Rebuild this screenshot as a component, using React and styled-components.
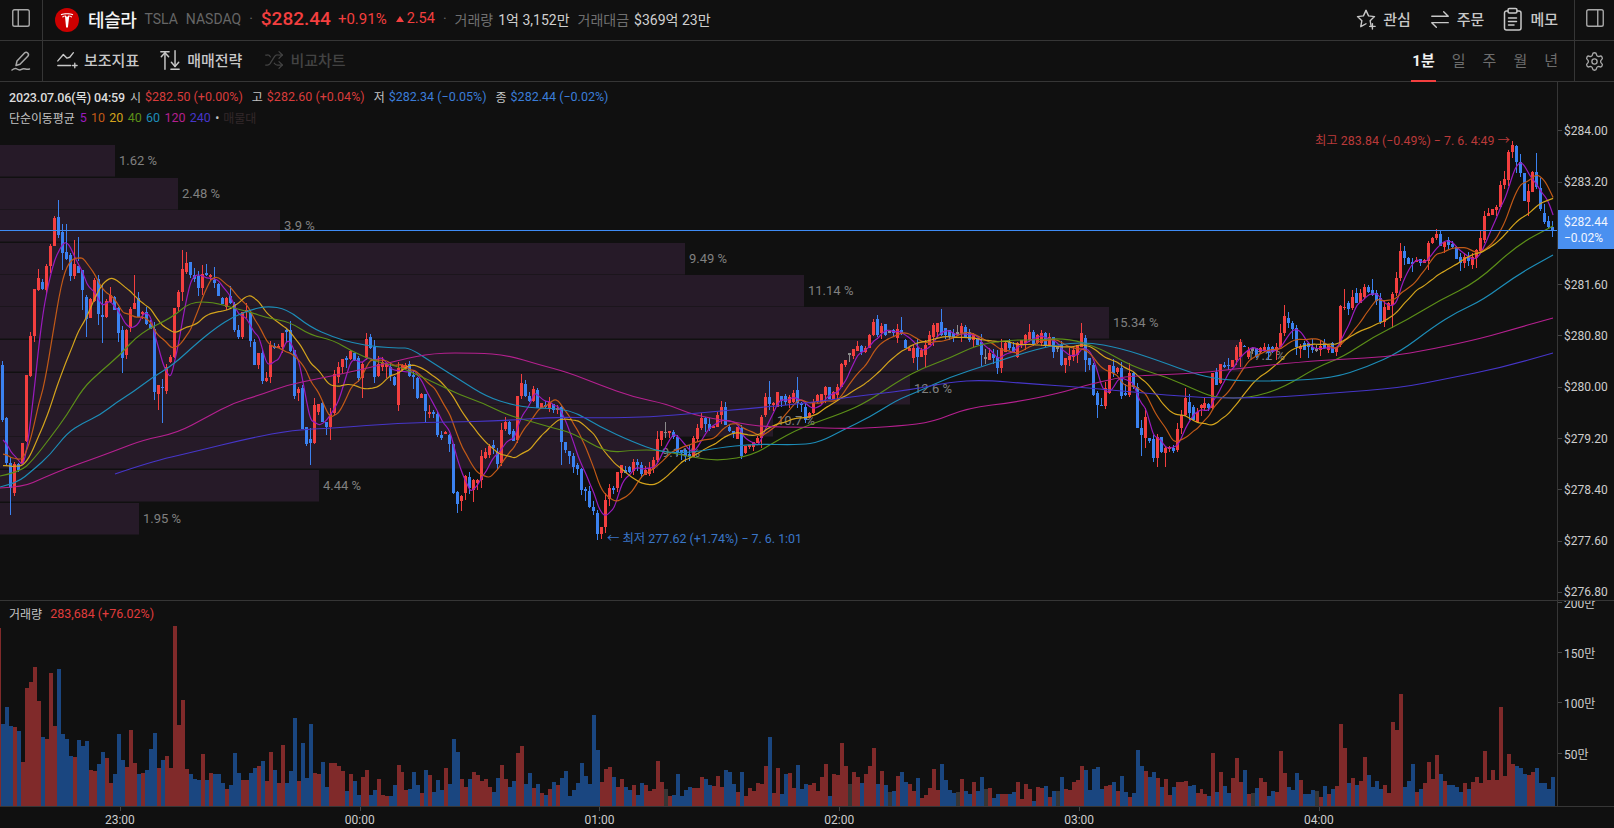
import React from 'react';
import styled, { createGlobalStyle } from 'styled-components';
import { PanelLeft, PanelRight, Shuffle, Settings } from 'lucide-react';

const RED = '#f33f3f';
const BLUE = '#3b82f0';
const LINE = '#363636';
const FONT = 'Roboto, "Noto Sans CJK KR", sans-serif';

const Global = createGlobalStyle`
  html, body { margin: 0; padding: 0; background: #101010; overflow: hidden; }
  * { box-sizing: border-box; }
`;

const VOL = `r178 b82 b99 b80 r79 b75 r44 r118 r124 r139 r105 b69 r67 r133 r80 b137 b72 b67 b50 r49 b66 b60 b65 r36 r35 b42 b54 r48 r23 b32 b72 b46 r39 r76 r43 b32 r33 b36 b57 b73 r38 b46 r50 r38 r180 r81 r106 r37 b32 b27 b26 r52 b26 r33 b32 b32 b23 r17 b21 b53 b33 r26 r26 b33 b38 r40 b45 r25 r54 b36 r23 r61 b23 b35 b88 r25 b63 b28 b82 r33 r32 b44 b19 r43 r43 r40 r35 b15 r32 b25 b11 r29 r36 b11 b16 r27 r11 r10 b10 b21 r41 r34 r16 b17 b34 b21 r13 b36 r31 b14 b26 b16 r38 b22 b67 b54 r27 r19 b27 r34 r31 r25 r27 r19 b14 b28 r41 r27 b19 b25 r53 r60 b22 b33 r18
b22 r13 b11 r17 b24 r21 b28 b35 b10 b16 b23 b43 b30 b22 b91 b56 r24 r37 r39 b29 r19 r27 b19 b16 r21 b11 b23 r21 r15 r17 r45 r24 g17 r10 b11 b32 b10 b16 b19 r18 r18 r29 b27 b21 r20 r30 r19 b36 b34 b22 r14 b34 r10 r18 r15 r23 r22 r40 b69 r13 r38 b12 b32 r33 r18 b41 b17 b22 r21 r23 r15 r29 r42 b10 r32 r31 r63 r40 g22 r34 r29 b23 r32 r40 r58 b22 r35 b21 g14 b15 r30 b34 b24 r22 r15 b28 r8 r11 r18 r37 r16 b42 b26 b16 b13 g14 r27 b15 b12 r24 b15 b29 g17 r18 b8 b12 r12 r12 b12 b14 r24 r7 r22 r17 b5 r19 r18 b20 r9 b15 g15 b29 r17 r16 r24 r26 r40 b36 b16 b37 b39 b17 r20 r21 b24 r15
b30 b14 r9 b13 b56 b40 r35 b29 b34 r28 b19 r27 r11 b19 r24 r24 r25 b20 b21 r13 r17 r12 b10 r53 b14 r34 b20 b13 r28 r48 r24 b36 r12 g13 b18 r28 r24 b10 b15 r14 r55 r33 b19 b16 b33 r26 b12 b12 b16 g15 r9 b20 r12 b17 r20 r82 r58 b23 r28 b21 r25 r49 b31 b19 b25 b17 r21 r13 r84 r76 r112 b19 b25 b42 r14 b17 r23 r44 r27 r51 b32 r25 b21 b21 b19 b14 r23 b17 r24 r29 r23 r55 r26 r36 r26 r99 r30 r52 r42 b40 b38 b32 r31 r34 b38 b23 b23 b17 b29`
  .split(/\s+/).map((s) => ({ c: s[0], h: Number(s.slice(1)) }));

const BODIES = `365,420 418,463 463,488 464,493 464,470 443,463 375,441 336,376 289,336 278,290
282,289 266,290 246,266 218,246 217,235 232,253 252,259 255,276 264,276 266,273
270,290 297,319 299,318 280,301 279,314 315,317 301,317 295,302 297,310 308,333
330,358 330,355 309,328 303,309 298,317 312,314 312,324 324,329 329,392 385,394
387,388 367,391 357,362 308,357 292,307 269,292 263,272 262,275 275,279 276,288
274,288 273,275 275,277 280,283 284,296 298,304 298,307 296,303 304,330 330,337
312,337 310,312 312,341 342,365 353,365 353,381 378,381 345,377 346,348 346,348
333,347 330,332 330,351 350,396 389,393 388,429 427,444 439,443 405,443 404,412
403,422 422,427 414,427 374,413 367,377 359,367 358,360 351,359 353,360 358,378
364,378 339,358 337,348 347,377 364,376 362,367 363,367 367,376 377,385 368,405
365,370 365,369 364,376 375,377 378,398 394,398 394,411 412,414 412,414 414,435
435,438 432,434 435,444 444,493 492,504 496,501 476,493 477,488 480,490 480,483
456,480 452,458 446,455 445,448 452,464 430,463 422,429 422,434 431,441 396,440
383,396 384,396 396,401 389,401 390,408 403,408 405,407 402,409 404,410 408,410
407,442 442,450 451,456 456,467 465,469 469,490 489,491 491,507 507,511 513,534
527,534 500,527 488,499 488,490 472,488 465,473 470,473 467,472 462,471 462,465
465,474 470,475 468,474 460,469 439,460 431,440 432,433 431,433 432,437 437,452
450,453 450,456 454,457 438,457 428,439 418,428 418,424 424,429 426,428 415,427
407,415 407,425 427,431 431,433 427,439 428,456 446,453 445,447 442,447 438,443
417,438 397,415 397,404 403,405 392,407 396,401 396,402 397,403 393,402 390,403
403,405 407,420 413,418 402,413 395,402 394,402 387,395 387,399 392,399 387,395
364,387 360,365 353,355 349,356 346,351 346,352 348,352 335,348 322,335 319,335
326,333 324,335 331,333 330,333 329,338 330,334 340,348 348,351 348,358 348,357
350,357 345,355 335,345 325,337 323,332 322,335 328,335 330,337 333,337 332,334
326,333 327,338 332,340 335,340 339,345 342,355 357,359 353,360 354,358 357,368
348,368 343,352 342,348 347,352 343,357 340,345 335,343 332,340 332,344 335,343
333,343 333,345 337,345 337,352 347,349 345,365 358,365 356,360 350,357 345,355
333,347 338,360 358,365 365,395 393,405 405,406 388,406 365,393 366,373 368,372
368,396 393,395 373,395 373,387 387,428 428,435 417,438 438,441 439,458 437,458
437,452 448,453 447,449 448,451 429,450 415,428 398,415 402,413 407,420 412,422
405,408 403,408 404,408 373,408 372,385 364,383 365,367 365,366 360,367 347,360
342,357 346,347 350,357 348,351 348,357 348,352 347,350 347,353 347,352 347,351
333,347 316,333 318,323 323,329 328,347 346,349 343,350 343,347 347,350 348,351
346,350 343,348 345,350 343,353 347,352 306,345 307,308 303,309 297,308 293,303
293,303 287,297 287,292 290,295 293,301 298,322 307,322 303,310 294,305 278,293
251,278 251,258 258,264 262,264 260,262 259,263 260,263 243,261 238,243 234,238
234,246 242,247 240,245 244,247 247,259 257,263 257,263 257,261 257,265 250,258
238,251 216,240 213,216 209,215 207,210 185,207 179,185 152,180 145,152 146,162
162,173 173,201 191,202 172,192 172,187 188,209 213,222 221,227 227,230`
  .split(/\s+/).map((s) => s.split(',').map(Number));

const WICK_TOP = { 14: 200, 15: 224, 16: 224, 18: 240, 25: 285, 33: 275, 45: 250, 46: 252, 50: 265, 53: 267, 91: 333,
  130: 374, 131: 380, 166: 422, 192: 381, 199: 377, 219: 315, 225: 317, 235: 309, 257: 324, 270: 323,
  321: 305, 336: 289, 350: 243, 378: 141, 384: 153, 386: 204 };
const WICK_BOT = { 2: 515, 15: 270, 19: 237, 20: 310, 21: 337, 24: 325, 25: 343, 30: 373, 38: 400, 39: 410, 40: 423, 75: 429,
  77: 465, 81: 435, 82: 440, 90: 398, 103: 389, 106: 422, 114: 513, 115: 511, 118: 502, 140: 465, 144: 475, 147: 508,
  150: 539, 151: 533, 229: 370, 245: 366, 250: 373, 271: 372, 274: 418, 285: 456, 288: 462, 289: 467, 291: 467,
  325: 358, 348: 328, 365: 271, 369: 268, 379: 173, 382: 216, 388: 237 };

const MA40 = [[0,476],[20,472],[33,460],[50,438],[67,415],[83,388],[100,372],[120,355],[140,333],[173,317],[190,302],[213,302],[233,308],[250,312],[267,318],[290,322],[310,335],[333,340],[353,352],[377,362],[400,367],[413,373],[433,382],[460,395],[483,403],[507,415],[533,422],[553,428],[573,433],[607,453],[633,450],[660,450],[690,457],[720,461],[753,455],[773,443],[800,428],[843,413],[867,402],[900,380],[923,368],[950,358],[977,345],[1007,340],[1033,340],[1067,338],[1100,348],[1133,367],[1167,377],[1200,392],[1217,398],[1250,398],[1283,388],[1317,367],[1343,357],[1373,337],[1407,320],[1440,300],[1477,282],[1517,245],[1553,226]];
const MA60 = [[0,487],[17,483],[33,470],[50,455],[67,433],[83,423],[100,415],[117,402],[133,392],[153,377],[173,365],[197,343],[217,327],[233,317],[250,310],[267,306],[287,309],[310,327],[333,337],[353,343],[377,347],[400,348],[410,348],[433,363],[460,380],[487,397],[513,405],[533,408],[570,409],[600,427],[633,442],[660,452],[690,453],[717,448],[753,444],[800,445],[820,442],[843,430],[870,417],[897,400],[917,392],[950,377],[987,365],[1017,355],[1053,345],[1087,342],[1120,348],[1157,360],[1200,376],[1233,381],[1283,381],[1333,378],[1367,367],[1400,352],[1433,327],[1457,312],[1483,300],[1517,275],[1553,255]];
const MA120 = [[0,488],[23,487],[43,478],[67,468],[90,460],[117,450],[143,440],[177,433],[207,417],[233,403],[260,395],[287,385],[317,379],[360,370],[400,360],[433,353],[477,353],[507,355],[540,365],[567,372],[600,385],[633,397],[667,404],[693,415],[733,422],[763,427],[800,427],[850,429],[900,426],[933,422],[967,408],[1017,402],[1060,393],[1087,385],[1117,378],[1133,376],[1200,373],[1243,368],[1300,362],[1343,359],[1387,357],[1433,349],[1483,338],[1517,328],[1553,318]];
const MA240 = [[115,474],[150,462],[193,452],[250,438],[293,430],[333,428],[400,423],[450,422],[500,421],[553,417],[600,418],[650,417],[700,413],[753,408],[800,404],[850,397],[910,390],[950,382],[983,380],[1033,384],[1077,387],[1133,392],[1200,398],[1267,398],[1333,393],[1400,388],[1450,378],[1500,368],[1553,353]];

const PROFILE = [
  [1.62, 145, 115], [2.48, 178, 178], [3.9, 210, 280], [9.49, 243, 685], [11.14, 275, 804], [15.34, 307, 1109],
  [17.2, 340, 1243], [12.6, 373, 910], [10.7, 405, 773], [9.14, 437, 658], [4.44, 470, 319], [1.95, 503, 139],
];

const barX = (k) => 1 + k * 3.995;
const rand = (k) => { const s = Math.sin(k * 12.9898 + 4.1) * 43758.5453; return s - Math.floor(s); };

const candles = BODIES.map(([t, b], k) => {
  const c = VOL[k + 1] ? VOL[k + 1].c : 'b';
  const top = WICK_TOP[k] ?? t - Math.round(rand(k) * rand(k + 500) * 12);
  const bot = WICK_BOT[k] ?? b + Math.round(rand(k + 900) * rand(k + 200) * 12);
  return { k, c, t, b: Math.max(b, t + 1), top, bot, close: c === 'r' ? t : c === 'b' ? b : (t + b) / 2 };
});

const movingAverage = (n, before) => candles.map((_, i) => {
  let sum = 0;
  for (let j = i - n + 1; j <= i; j++) sum += j >= 0 ? candles[j].close : before;
  return [barX(i) + 2, sum / n];
});

const smoothPath = (pts) => {
  let d = `M${pts[0][0].toFixed(1)} ${pts[0][1].toFixed(1)}`;
  for (let i = 1; i < pts.length - 1; i++) {
    const mx = (pts[i][0] + pts[i + 1][0]) / 2;
    const my = (pts[i][1] + pts[i + 1][1]) / 2;
    d += `Q${pts[i][0].toFixed(1)} ${pts[i][1].toFixed(1)} ${mx.toFixed(1)} ${my.toFixed(1)}`;
  }
  const last = pts[pts.length - 1];
  return `${d}L${last[0].toFixed(1)} ${last[1].toFixed(1)}`;
};

const MA_COLORS = { 5: '#9a1bbd', 10: '#c25a17', 20: '#d4a41c', 40: '#5c8f18', 60: '#1d8db8', 120: '#b5208f', 240: '#4636c9' };

const candlePath = (c) => candles.filter((x) => x.c === c).map((x) => {
  const x0 = Math.round(barX(x.k));
  return `M${x0 + 1} ${x.top}h1V${x.bot}h-1ZM${x0} ${x.t}h3V${x.b}h-3Z`;
}).join('');

const volPath = (c) => VOL.map((v, i) => ({ ...v, k: i - 1 })).filter((v) => v.c === c).map((v) => {
  const x0 = Math.round(barX(v.k));
  const x1 = Math.round(barX(v.k + 1));
  return `M${x0} ${806 - v.h}H${x1}V806H${x0}Z`;
}).join('');

const PRICES = ['284.00', '283.20', '', '281.60', '280.80', '280.00', '279.20', '278.40', '277.60', '276.80'];

/* ---------- page ---------- */
const Page = styled.div`
  width: 1614px; height: 828px; overflow: hidden; display: flex; flex-direction: column;
  background: #101010; color: #ddd; font-family: ${FONT};
`;
const Bar = styled.div`
  height: 41px; flex: none; display: flex; align-items: stretch; border-bottom: 1px solid ${LINE};
`;
const EdgeCell = styled.div`
  flex: none; display: flex; align-items: center; justify-content: center; color: #a8a8a8;
  width: ${(p) => p.$w}px;
  padding-bottom: ${(p) => p.$pb || 0}px;
  ${(p) => (p.$right ? `border-left: 1px solid ${LINE};` : `border-right: 1px solid ${LINE};`)}
`;
const BarMain = styled.div`
  flex: 1; min-width: 0; display: flex; align-items: center; padding: 0 16px 3px ${(p) => p.$pl}px;
`;
const Spacer = styled.div` flex: 1; `;

/* ---------- quote ---------- */
const LogoWrap = styled.span` display: flex; margin: 3px 9px 0 0; `;
const Name = styled.span` font-size: 18px; font-weight: 500; color: #f4f4f4; letter-spacing: -0.4px; margin-right: 8px; `;
const Sub = styled.span` font-size: 14px; color: #666; margin-right: 8px; `;
const Dot = styled.span` font-size: 14px; color: #666; margin: 0 8px 0 ${(p) => p.$ml ?? 8}px; `;
const BigPrice = styled.span` font-size: 19px; font-weight: 500; color: ${RED}; margin-right: 7px; `;
const Change = styled.span` font-size: ${(p) => p.$fs}px; color: ${RED}; margin-right: ${(p) => p.$mr || 0}px; `;
const Tri = styled.span`
  width: 0; height: 0; border-left: 4px solid transparent; border-right: 4px solid transparent;
  border-bottom: 6px solid ${RED}; margin-right: 3px;
`;
const StatLabel = styled.span` font-size: 14px; color: #6f6f6f; margin-right: 5px; `;
const StatValue = styled.span` font-size: 14px; color: #cfcfcf; margin-right: 8px; `;

/* ---------- actions ---------- */
const Action = styled.span`
  display: flex; align-items: center; gap: 6px; font-size: 15px; font-weight: 500; color: #c8c8c8;
  margin-left: ${(p) => p.$ml || 0}px;
`;
const Tool = styled.span`
  display: flex; align-items: center; gap: 6px; font-size: 15px; font-weight: 500;
  color: ${(p) => (p.$off ? '#434343' : '#c8c8c8')};
  margin-right: ${(p) => p.$mr || 0}px;
`;
const Period = styled.span`
  height: 40px; display: flex; align-items: center; position: relative; font-size: 15px; padding-bottom: 3px;
  align-self: flex-end; margin-bottom: -3px;
  font-weight: ${(p) => (p.$on ? 700 : 400)}; color: ${(p) => (p.$on ? '#f2f2f2' : '#6d6d6d')};
  margin-left: ${(p) => p.$ml || 0}px;
  ${(p) => p.$on && `&::after { content: ''; position: absolute; left: -1px; right: -1px; bottom: -1px; height: 2px; background: ${RED}; }`}
`;

/* ---------- chart ---------- */
const Pane = styled.div`
  flex: none; height: ${(p) => p.$h}px; display: flex; position: relative;
  ${(p) => p.$top && `border-top: 1px solid ${LINE};`}
`;
const Plot = styled.svg`
  display: block; width: 1557px; flex: none; font-family: ${FONT};
`;
const ProfileRow = styled.rect` fill: #261a28; `;
const ProfileLabel = styled.text` fill: #808080; font-size: 13px; `;
const Extreme = styled.text` fill: ${(p) => p.$c}; font-size: 12.4px; `;
const Legend = styled.div`
  position: absolute; left: 9px; top: 4px; display: flex; flex-direction: column; pointer-events: none;
`;
const LegendRow = styled.div` display: flex; align-items: center; height: 21px; font-size: 12px; `;
const Stamp = styled.span` font-size: 12.5px; font-weight: 500; color: #dcdcdc; letter-spacing: -0.15px; margin-right: 5px; `;
const OhlcKey = styled.span` color: #c4c4c4; margin-right: ${(p) => p.$mr ?? 4}px; `;
const OhlcVal = styled.span` font-size: 12.5px; color: ${(p) => p.$c}; margin-right: 9px; `;
const MaTitle = styled.span` color: #c4c4c4; margin-right: 5px; letter-spacing: -0.1px; `;
const MaNum = styled.span` color: ${(p) => p.$c}; margin-right: 4.3px; font-size: 12.5px; `;
const MaOff = styled.span` color: #33282a; `;
const VolTitle = styled.div`
  position: absolute; left: 9px; top: 2px; display: flex; align-items: center; height: 21px; font-size: 12px;
`;
const Axis = styled.div`
  flex: 1; border-left: 1px solid ${LINE}; position: relative; overflow: hidden;
  padding-top: ${(p) => p.$pt || 0}px;
`;
const AxisTick = styled.div`
  height: ${(p) => p.$h}px; display: flex; align-items: center; font-size: 12px; color: #cdcdcd; gap: 2px;
  &::before { content: ''; width: 4px; height: 1px; background: #444; flex: none; }
`;
const VolAxisInner = styled.div` margin-top: -24px; `;
const PriceTag = styled.div`
  position: absolute; left: -1px; right: 0; top: 128px; height: 39px; background: #4a90f0; color: #f2f6ff;
  font-size: 12px; line-height: 16px; padding: 4px 0 0 7px;
`;
const TimeAxis = styled.div`
  flex: 1; display: flex; border-top: 1px solid ${LINE};
`;
const TimeTick = styled.div`
  width: 239.8px; flex: none; position: relative; text-align: center; font-size: 12px; color: #cdcdcd; padding-top: 6px;
  &::before { content: ''; position: absolute; left: 50%; top: 0; width: 1px; height: 4px; background: #444; }
`;

/* ---------- icons ---------- */
const Ico = ({ size = 22, stroke = 1.5, children }) => (
  <svg width={size} height={size} viewBox="0 0 24 24" fill="none" stroke="currentColor" strokeWidth={stroke} strokeLinecap="round" strokeLinejoin="round">{children}</svg>
);
const TeslaLogo = () => (
  <svg width="24" height="24" viewBox="0 0 24 24">
    <circle cx="12" cy="12" r="12" fill="#cc0000" />
    <path d="M12 9.2 13.3 7.6c1.6 0 2.8.3 3.7.8-.1.9-.6 1.2-1 1.2-.2-.8-.6-1-1.8-1L12.9 19.6h-1.8L10 8.6c-1.2 0-1.6.2-1.8 1-.4 0-.9-.3-1-1.2.9-.5 2.1-.8 3.7-.8z" fill="#fff" />
    <path d="M5.8 6.3c1.7-.8 3.8-1.1 6.2-1.1s4.500.3 6.200 1.100l-.3.900c-1.600-.6-3.600-.9-5.900-.9s-4.300.3-5.900.900z" fill="#fff" />
  </svg>
);
const StarPlus = () => (
  <Ico><path d="M12 2.6l2.8 6 6.500.8-4.800 4.500 1.200 6.400" /><path d="M12 17.200l-5.700 3.200 1.200-6.500-4.800-4.500 6.500-.8L12 2.600" /><path d="M16 20h6M19 17v6" /></Ico>
);
const Swap = () => (
  <Ico><path d="M3 9h18l-5-5" /><path d="M21 16H3l5 5" /></Ico>
);
const Memo = () => (
  <Ico size={24}>
    <path d="M8 4H6.500a2 2 0 0 0-2 2v15a2 2 0 0 0 2 2H19a2 2 0 0 0 2-2V6a2 2 0 0 0-2-2h-2" />
    <rect x="8" y="1.500" width="9" height="4.500" rx="1.500" />
    <path d="M8.500 11h8M8.500 14.500h8M8.500 18h5.500" />
  </Ico>
);
const SignPen = () => (
  <Ico size={24}><path d="M7 16.500l1-4.500 7.500-8a2.300 2.300 0 0 1 3.300 3.200L11 15.200z" /><path d="M3 21c2-1.500 3.500-2 5-1s3 1.300 4.500.3 2.500-.8 4-.3 2.500.5 4 0" /></Ico>
);
const Indicator = () => (
  <Ico><path d="M2 13l6-7 4 4 3-1 4-5" /><path d="M2 18h14" /><path d="M18 18h5M20.500 15.500v5" /></Ico>
);
const Strategy = () => (
  <Ico stroke={1.6}><path d="M2 3h9" /><path d="M6.500 22V4" /><path d="M2.500 8.500l4-4.500 4 4.500" /><path d="M17.500 2v17" /><path d="M13.500 14.500l4 4.500 4-4.500" /><path d="M13 22h9" /></Ico>
);

export default function App() {
  const ma5 = smoothPath(movingAverage(5, 445));
  const ma10 = smoothPath(movingAverage(10, 458));
  const ma20 = smoothPath(movingAverage(20, 468));
  return (
    <Page>
      <Global />
      <Bar>
        <EdgeCell $w={43} $pb={4}><PanelLeft size={22} strokeWidth={1.5} /></EdgeCell>
        <BarMain $pl={12}>
          <LogoWrap><TeslaLogo /></LogoWrap>
          <Name>테슬라</Name>
          <Sub>TSLA</Sub>
          <Sub>NASDAQ</Sub>
          <Dot $ml={0}>·</Dot>
          <BigPrice>$282.44</BigPrice>
          <Change $fs={15} $mr={9}>+0.91%</Change>
          <Tri />
          <Change $fs={14.5}>2.54</Change>
          <Dot>·</Dot>
          <StatLabel>거래량</StatLabel>
          <StatValue>1억 3,152만</StatValue>
          <StatLabel>거래대금</StatLabel>
          <StatValue>$369억 23만</StatValue>
          <Spacer />
          <Action><StarPlus />관심</Action>
          <Action $ml={18}><Swap />주문</Action>
          <Action $ml={16}><Memo />메모</Action>
        </BarMain>
        <EdgeCell $w={40} $right $pb={4}><PanelRight size={22} strokeWidth={1.5} /></EdgeCell>
      </Bar>
      <Bar>
        <EdgeCell $w={43}><SignPen /></EdgeCell>
        <BarMain $pl={13}>
          <Tool $mr={20}><Indicator />보조지표</Tool>
          <Tool $mr={22}><Strategy />매매전략</Tool>
          <Tool $off><Shuffle size={20} strokeWidth={1.5} />비교차트</Tool>
          <Spacer />
          <Period $on>1분</Period>
          <Period $ml={17}>일</Period>
          <Period $ml={17}>주</Period>
          <Period $ml={17}>월</Period>
          <Period $ml={17}>년</Period>
        </BarMain>
        <EdgeCell $w={40} $right><Settings size={21} strokeWidth={1.5} /></EdgeCell>
      </Bar>
      <Pane $h={518}>
        <Plot viewBox="0 82 1557 518" height="518">
          {PROFILE.map(([pct, y, w]) => (
            <g key={pct}>
              <ProfileRow x="0" y={y} width={w} height="31.5" />
              <ProfileLabel x={w + 4} y={y + 20}>{pct} %</ProfileLabel>
            </g>
          ))}
          <path d={candlePath('g')} fill="#8a8a8a" shapeRendering="crispEdges" />
          <path d={candlePath('r')} fill={RED} shapeRendering="crispEdges" />
          <path d={candlePath('b')} fill={BLUE} shapeRendering="crispEdges" />
          <path d={ma5} fill="none" stroke={MA_COLORS[5]} strokeWidth="1.2" />
          <path d={ma10} fill="none" stroke={MA_COLORS[10]} strokeWidth="1.2" />
          <path d={ma20} fill="none" stroke={MA_COLORS[20]} strokeWidth="1.2" />
          <path d={smoothPath(MA40)} fill="none" stroke={MA_COLORS[40]} strokeWidth="1.2" />
          <path d={smoothPath(MA60)} fill="none" stroke={MA_COLORS[60]} strokeWidth="1.2" />
          <path d={smoothPath(MA120)} fill="none" stroke={MA_COLORS[120]} strokeWidth="1.2" />
          <path d={smoothPath(MA240)} fill="none" stroke={MA_COLORS[240]} strokeWidth="1.2" />
          <rect x="0" y="230" width="1557" height="1" fill="#3f8cf5" />
          <Extreme $c="#bb3a3a" x="1510" y="145" textAnchor="end">최고 283.84 (−0.49%) − 7. 6. 4:49 →</Extreme>
          <Extreme $c="#3a76c8" x="607" y="543">← 최저 277.62 (+1.74%) − 7. 6. 1:01</Extreme>
        </Plot>
        <Legend>
          <LegendRow>
            <Stamp>2023.07.06(목) 04:59</Stamp>
            <OhlcKey>시</OhlcKey><OhlcVal $c="#d83c3c">$282.50 (+0.00%)</OhlcVal>
            <OhlcKey>고</OhlcKey><OhlcVal $c="#d83c3c">$282.60 (+0.04%)</OhlcVal>
            <OhlcKey>저</OhlcKey><OhlcVal $c="#3b7dd8">$282.34 (−0.05%)</OhlcVal>
            <OhlcKey>종</OhlcKey><OhlcVal $c="#3b7dd8">$282.44 (−0.02%)</OhlcVal>
          </LegendRow>
          <LegendRow>
            <MaTitle>단순이동평균</MaTitle>
            {[5, 10, 20, 40, 60, 120, 240].map((n) => <MaNum key={n} $c={MA_COLORS[n]}>{n}</MaNum>)}
            <OhlcKey $mr={4}>•</OhlcKey>
            <MaOff>매물대</MaOff>
          </LegendRow>
        </Legend>
        <Axis $pt={23.3}>
          {PRICES.map((p, i) => (
            <AxisTick key={i} $h={51.28}>{p && `$${p}`}</AxisTick>
          ))}
          <PriceTag>$282.44<br />−0.02%</PriceTag>
        </Axis>
      </Pane>
      <Pane $h={206} $top>
        <Plot viewBox="0 601 1557 205" height="205">
          <path d={volPath('g')} fill="#363636" shapeRendering="crispEdges" />
          <path d={volPath('r')} fill="#802a2a" shapeRendering="crispEdges" />
          <path d={volPath('b')} fill="#1a4680" shapeRendering="crispEdges" />
        </Plot>
        <VolTitle>
          <OhlcKey $mr={8}>거래량</OhlcKey>
          <OhlcVal $c="#e03c3c">283,684 (+76.02%)</OhlcVal>
        </VolTitle>
        <Axis>
          <VolAxisInner>
            {['200만', '150만', '100만', '50만'].map((t) => <AxisTick key={t} $h={50.4}>{t}</AxisTick>)}
          </VolAxisInner>
        </Axis>
      </Pane>
      <TimeAxis>
        {['23:00', '00:00', '01:00', '02:00', '03:00', '04:00'].map((t) => <TimeTick key={t}>{t}</TimeTick>)}
      </TimeAxis>
    </Page>
  );
}
